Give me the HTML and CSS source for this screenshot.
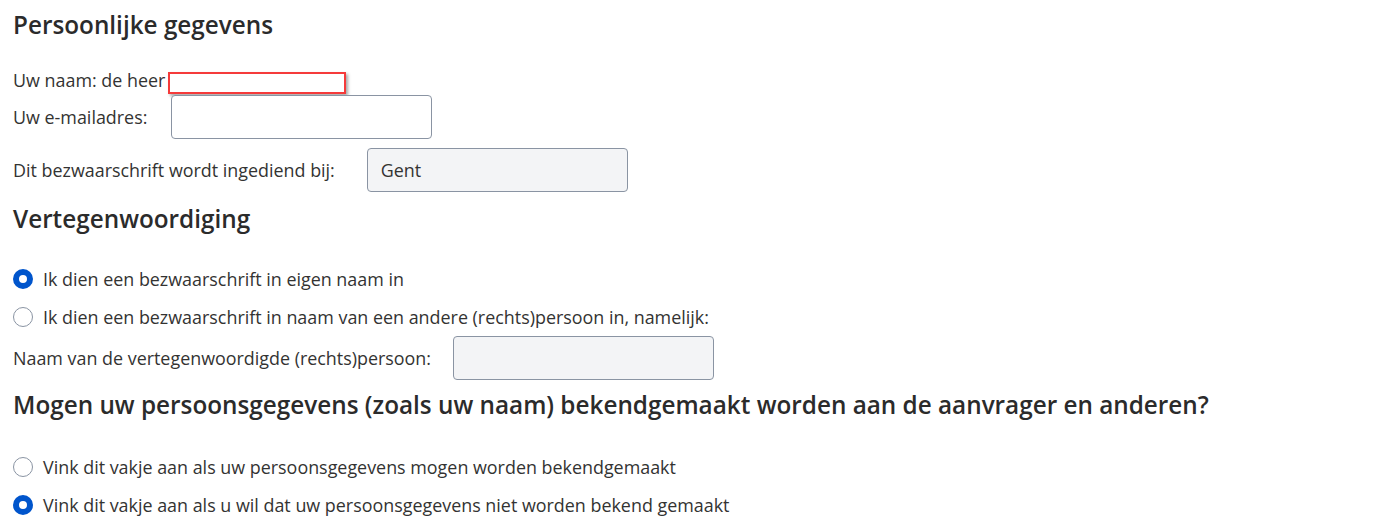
FILE: index.html
```html
<!DOCTYPE html>
<html lang="nl">
<head>
<meta charset="utf-8">
<title>Persoonlijke gegevens</title>
<link rel="stylesheet" href="styles.css">
</head>
<body>
<main class="form">
  <h2 class="title title-first">Persoonlijke gegevens</h2>
  <div class="row row-name">
    <span class="label">Uw naam: de heer</span>
    <span class="redact"></span>
  </div>
  <div class="row row-email">
    <label class="label" for="email">Uw e-mailadres:</label>
    <input id="email" class="input" type="text">
  </div>
  <div class="row row-gent">
    <label class="label" for="loc">Dit bezwaarschrift wordt ingediend bij:</label>
    <input id="loc" class="input input-ro" type="text" value="Gent" readonly>
  </div>

  <h2 class="title">Vertegenwoordiging</h2>
  <div class="radios radios-first">
    <label class="radio"><span class="dot on"></span>Ik dien een bezwaarschrift in eigen naam in</label>
    <label class="radio"><span class="dot"></span>Ik dien een bezwaarschrift in naam van een andere (rechts)persoon in, namelijk:</label>
  </div>
  <div class="row row-rep">
    <label class="label" for="rep">Naam van de vertegenwoordigde (rechts)persoon:</label>
    <input id="rep" class="input input-ro" type="text" readonly>
  </div>

  <h2 class="title">Mogen uw persoonsgegevens (zoals uw naam) bekendgemaakt worden aan de aanvrager en anderen?</h2>
  <div class="radios radios-second">
    <label class="radio"><span class="dot"></span>Vink dit vakje aan als uw persoonsgegevens mogen worden bekendgemaakt</label>
    <label class="radio"><span class="dot on"></span>Vink dit vakje aan als u wil dat uw persoonsgegevens niet worden bekend gemaakt</label>
  </div>
</main>
</body>
</html>
```
FILE: styles.css
```css
html, body {
  margin: 0;
  padding: 0;
  background: #ffffff;
}
body {
  font-family: "Open Sans", "Noto Sans", sans-serif;
  font-size: 17.9px;
  color: #333332;
}
.form {
  padding: 0 13px;
  display: flex;
  flex-direction: column;
}
.title {
  font-size: 24.3px;
  font-weight: 600;
  line-height: 32px;
  margin: 0;
  color: #2b2b2b;
}
.title-first {
  margin-top: 9px;
}
.row {
  display: flex;
  align-items: center;
}
.label {
  line-height: 22px;
}
.row-name {
  margin-top: 28px;
  height: 22px;
  align-items: flex-start;
}
.redact {
  display: block;
  width: 174px;
  height: 18px;
  margin-left: 3px;
  margin-top: 3px;
  border: 2px solid #f53a3a;
  box-shadow: 2px 2px 3px rgba(0, 0, 0, 0.35);
  background: #ffffff;
}
.row-email {
  margin-top: 4px;
  gap: 24px;
}
.row-gent {
  margin-top: 9px;
  gap: 32px;
  margin-bottom: 11px;
}
.row-rep {
  margin-top: 8px;
  gap: 22px;
  margin-bottom: 9px;
}
.input {
  box-sizing: border-box;
  width: 261px;
  height: 44px;
  border: 1px solid #8a94a3;
  border-radius: 4px;
  background: #ffffff;
  font: inherit;
  color: #333332;
  padding: 0 13px;
  outline: none;
}
.input-ro {
  background: #f3f4f6;
}
.radios {
  display: flex;
  flex-direction: column;
  gap: 16px;
}
.radios-first {
  margin-top: 33px;
}
.radios-second {
  margin-top: 35px;
}
.radio {
  display: flex;
  align-items: center;
  gap: 10px;
  line-height: 22px;
}
.dot {
  box-sizing: border-box;
  width: 20px;
  height: 20px;
  border-radius: 50%;
  border: 1px solid #8a94a3;
  background: #ffffff;
  flex: none;
}
.dot.on {
  border: 6px solid #0055cc;
}
```
